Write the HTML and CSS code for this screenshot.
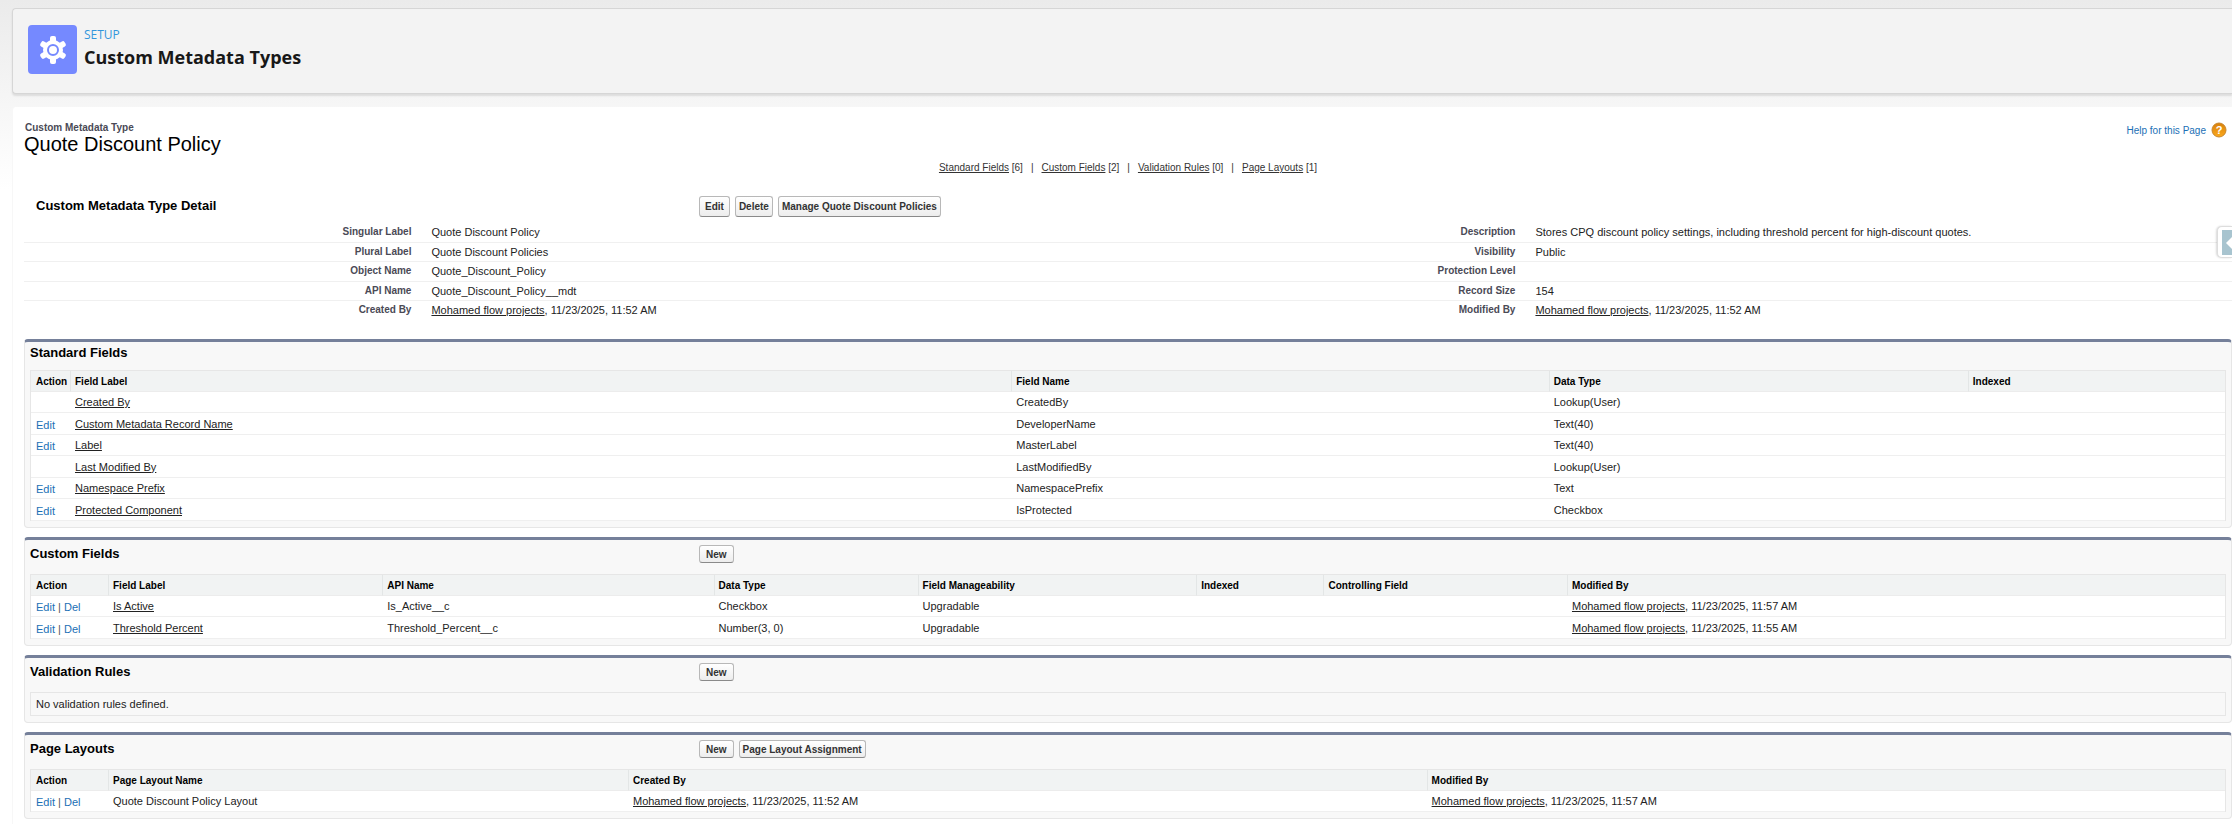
FILE: index.html
```html
<!DOCTYPE html>
<html lang="en">
<head>
    <meta charset="UTF-8">
    <meta name="viewport" content="width=device-width, initial-scale=1.0">
    <title>Custom Metadata Types</title>
    <link rel="stylesheet" href="styles.css">
</head>
<body>
    <header class="page-header">
        <div class="header-icon">
            <svg width="28" height="28" viewBox="-14 -14 28 28">
                <g fill="#fff">
                    <circle r="10"/>
                    <rect x="-3" y="-14" width="6" height="28" rx="2"/>
                    <rect x="-3" y="-14" width="6" height="28" rx="2" transform="rotate(60)"/>
                    <rect x="-3" y="-14" width="6" height="28" rx="2" transform="rotate(120)"/>
                </g>
                <circle r="5" fill="#fff" stroke="#7589ff" stroke-width="2"/>
            </svg>
        </div>
        <div class="header-text">
            <p class="header-label">SETUP</p>
            <h1>Custom Metadata Types</h1>
        </div>
    </header>

    <main class="content">
        <div class="title-bar">
            <div>
                <p class="type-label">Custom Metadata Type</p>
                <h2 class="type-name">Quote Discount Policy</h2>
            </div>
            <a class="help-link" href="#">
                <span>Help for this Page</span>
                <svg width="16" height="16" viewBox="0 0 16 16">
                    <defs>
                        <linearGradient id="helpFill" x1="0" y1="0" x2="0" y2="1">
                            <stop offset="0" stop-color="#d9800b"/>
                            <stop offset="1" stop-color="#fba91c"/>
                        </linearGradient>
                    </defs>
                    <circle cx="8" cy="8" r="7" fill="url(#helpFill)" stroke="#c9872d"/>
                    <text class="help-mark" x="8" y="12" text-anchor="middle">?</text>
                </svg>
            </a>
        </div>

        <nav class="jump-links">
            <a href="#standard"><u>Standard Fields</u> [6]</a><span>|</span>
            <a href="#custom"><u>Custom Fields</u> [2]</a><span>|</span>
            <a href="#validation"><u>Validation Rules</u> [0]</a><span>|</span>
            <a href="#layouts"><u>Page Layouts</u> [1]</a>
        </nav>

        <section class="detail">
            <div class="detail-head">
                <h3>Custom Metadata Type Detail</h3>
                <div class="buttons">
                    <button class="btn btn-short">Edit</button>
                    <button class="btn">Delete</button>
                    <button class="btn">Manage Quote Discount Policies</button>
                </div>
            </div>
            <table class="detail-table">
                <tr>
                    <th>Singular Label</th><td>Quote Discount Policy</td>
                    <th>Description</th><td>Stores CPQ discount policy settings, including threshold percent for high-discount quotes.</td>
                </tr>
                <tr>
                    <th>Plural Label</th><td>Quote Discount Policies</td>
                    <th>Visibility</th><td>Public</td>
                </tr>
                <tr>
                    <th>Object Name</th><td>Quote_Discount_Policy</td>
                    <th>Protection Level</th><td></td>
                </tr>
                <tr>
                    <th>API Name</th><td>Quote_Discount_Policy__mdt</td>
                    <th>Record Size</th><td>154</td>
                </tr>
                <tr>
                    <th>Created By</th><td><a href="#">Mohamed flow projects</a>, 11/23/2025, 11:52 AM</td>
                    <th>Modified By</th><td><a href="#">Mohamed flow projects</a>, 11/23/2025, 11:52 AM</td>
                </tr>
            </table>
        </section>

        <section class="block" id="standard">
            <div class="block-head block-head-plain">
                <h3>Standard Fields</h3>
            </div>
            <table class="list standard-list">
                <thead>
                    <tr>
                        <th class="col-action">Action</th>
                        <th class="col-label">Field Label</th>
                        <th class="col-name">Field Name</th>
                        <th class="col-type">Data Type</th>
                        <th>Indexed</th>
                    </tr>
                </thead>
                <tbody>
                    <tr><td class="action"></td><td><a href="#">Created By</a></td><td>CreatedBy</td><td>Lookup(User)</td><td></td></tr>
                    <tr><td class="action"><a href="#">Edit</a></td><td><a href="#">Custom Metadata Record Name</a></td><td>DeveloperName</td><td>Text(40)</td><td></td></tr>
                    <tr><td class="action"><a href="#">Edit</a></td><td><a href="#">Label</a></td><td>MasterLabel</td><td>Text(40)</td><td></td></tr>
                    <tr><td class="action"></td><td><a href="#">Last Modified By</a></td><td>LastModifiedBy</td><td>Lookup(User)</td><td></td></tr>
                    <tr><td class="action"><a href="#">Edit</a></td><td><a href="#">Namespace Prefix</a></td><td>NamespacePrefix</td><td>Text</td><td></td></tr>
                    <tr><td class="action"><a href="#">Edit</a></td><td><a href="#">Protected Component</a></td><td>IsProtected</td><td>Checkbox</td><td></td></tr>
                </tbody>
            </table>
        </section>

        <section class="block" id="custom">
            <div class="block-head">
                <h3>Custom Fields</h3>
                <div class="buttons">
                    <button class="btn btn-small btn-new">New</button>
                </div>
            </div>
            <table class="list custom-list">
                <thead>
                    <tr>
                        <th class="col-action">Action</th>
                        <th class="col-label">Field Label</th>
                        <th class="col-api">API Name</th>
                        <th class="col-type">Data Type</th>
                        <th class="col-manage">Field Manageability</th>
                        <th class="col-indexed">Indexed</th>
                        <th class="col-control">Controlling Field</th>
                        <th>Modified By</th>
                    </tr>
                </thead>
                <tbody>
                    <tr>
                        <td class="action"><a href="#">Edit</a> | <a href="#">Del</a></td>
                        <td><a href="#">Is Active</a></td>
                        <td>Is_Active__c</td>
                        <td>Checkbox</td>
                        <td>Upgradable</td>
                        <td></td>
                        <td></td>
                        <td><a href="#">Mohamed flow projects</a>, 11/23/2025, 11:57 AM</td>
                    </tr>
                    <tr>
                        <td class="action"><a href="#">Edit</a> | <a href="#">Del</a></td>
                        <td><a href="#">Threshold Percent</a></td>
                        <td>Threshold_Percent__c</td>
                        <td>Number(3, 0)</td>
                        <td>Upgradable</td>
                        <td></td>
                        <td></td>
                        <td><a href="#">Mohamed flow projects</a>, 11/23/2025, 11:55 AM</td>
                    </tr>
                </tbody>
            </table>
        </section>

        <section class="block" id="validation">
            <div class="block-head">
                <h3>Validation Rules</h3>
                <div class="buttons">
                    <button class="btn btn-small btn-new">New</button>
                </div>
            </div>
            <p class="empty">No validation rules defined.</p>
        </section>

        <section class="block" id="layouts">
            <div class="block-head">
                <h3>Page Layouts</h3>
                <div class="buttons">
                    <button class="btn btn-small btn-new">New</button>
                    <button class="btn btn-small">Page Layout Assignment</button>
                </div>
            </div>
            <table class="list layout-list">
                <thead>
                    <tr>
                        <th class="col-action">Action</th>
                        <th class="col-label">Page Layout Name</th>
                        <th class="col-created">Created By</th>
                        <th>Modified By</th>
                    </tr>
                </thead>
                <tbody>
                    <tr>
                        <td class="action"><a href="#">Edit</a> | <a href="#">Del</a></td>
                        <td>Quote Discount Policy Layout</td>
                        <td><a href="#">Mohamed flow projects</a>, 11/23/2025, 11:52 AM</td>
                        <td><a href="#">Mohamed flow projects</a>, 11/23/2025, 11:57 AM</td>
                    </tr>
                </tbody>
            </table>
        </section>
    </main>

    <!-- collapsed side panel handle -->
    <button class="side-tab" aria-label="Open side panel">
        <svg width="10" height="25" viewBox="0 0 10 25">
            <rect width="10" height="25" fill="#a8c4cf"/>
            <path d="M4 13l6-6v12z" fill="#fff"/>
        </svg>
    </button>
</body>
</html>
```
FILE: styles.css
```css
* {
    box-sizing: border-box;
}

body {
    font-family: Arial, "Liberation Sans", sans-serif;
    font-size: 11px;
    color: #222;
    margin: 0;
    padding: 8px 0 0 12px;
    background: #fff linear-gradient(#ebebeb, #fff 190px) no-repeat;
}

h1, h2, h3, p {
    margin: 0;
}

/* Setup header */
.page-header {
    display: flex;
    gap: 7px;
    padding: 16px 15px 19px;
    background: #f3f3f3;
    border: 1px solid #d6d6d6;
    border-right: none;
    border-radius: 4px 0 0 4px;
    box-shadow: 0 2px 2px rgba(0, 0, 0, 0.1);
}

.header-icon {
    display: flex;
    align-items: center;
    justify-content: center;
    width: 49px;
    height: 49px;
    background: #7589ff;
    border-radius: 4px;
}

.header-text {
    font-family: "Segoe UI", "Open Sans", sans-serif;
}

.header-label {
    font-size: 12px;
    line-height: 20px;
    color: #3296dc;
}

.header-text h1 {
    font-size: 18px;
    line-height: 24px;
    color: #181818;
}

/* Page content */
.content {
    margin-top: 13px;
    padding: 15px 0 5px 11px;
    background: #fff;
    border-left: 1px solid #f7f7f7;
    border-radius: 4px 0 0 0;
}

.title-bar {
    display: flex;
    justify-content: space-between;
    align-items: flex-start;
}

.type-label {
    font-size: 10px;
    line-height: 12px;
    font-weight: bold;
    color: #4a4a56;
    padding-left: 1px;
}

.type-name {
    font-size: 20px;
    line-height: 20px;
    font-weight: normal;
    color: #000;
}

.help-link {
    display: flex;
    gap: 5px;
    align-items: flex-start;
    padding-right: 5px;
    font-size: 10px;
    line-height: 18px;
    color: #1b6fb5;
    text-decoration: none;
}

.help-mark {
    font-size: 11px;
    font-weight: bold;
    fill: #fff;
}

.jump-links {
    display: flex;
    justify-content: center;
    gap: 8px;
    margin: 7px 0 21px;
    font-size: 10px;
    line-height: 14px;
    color: #333;
}

.jump-links a {
    color: #333;
    text-decoration: none;
}

h3 {
    width: 675px;
    font-size: 13px;
    line-height: 20px;
    color: #000;
}

.buttons {
    display: flex;
    gap: 5px;
}

.btn {
    height: 21px;
    padding: 0 3px;
    font-family: inherit;
    font-size: 10px;
    font-weight: bold;
    color: #333;
    background: linear-gradient(#fff, #ededed);
    border: 1px solid #b8b8b8;
    border-bottom-color: #8a8a8a;
    border-radius: 3px;
}

.btn-short {
    padding: 0 5px;
}

.btn-new {
    padding: 0 6px;
}

.btn-small {
    height: 18px;
}

/* Detail section */
.detail-head {
    display: flex;
}

.detail-head h3 {
    padding-left: 12px;
}

.detail-table {
    width: 100%;
    margin: 5px 0 19px;
    border-collapse: collapse;
    table-layout: fixed;
}

.detail-table th, .detail-table td {
    height: 20px;
    padding: 0 10px;
    line-height: 18px;
    border-bottom: 1px solid #f0f0f0;
}

.detail-table tr:nth-child(even) th, .detail-table tr:nth-child(even) td {
    height: 19px;
}

.detail-table tr:last-child th, .detail-table tr:last-child td {
    border-bottom: none;
}

.detail-table th {
    width: 18%;
    font-size: 10px;
    text-align: right;
    color: #4a4a56;
}

.detail-table td {
    width: 32%;
    text-align: left;
}

td a {
    color: #222;
}

/* Related lists */
.block {
    margin-bottom: 9px;
    padding: 0 5px 6px;
    background: #f8f8f8;
    border: 1px solid #e6e6e6;
    border-top: 3px solid #75809a;
    border-radius: 4px;
}

.block:last-child {
    margin-bottom: 0;
}

.block-head {
    display: flex;
    align-items: center;
    height: 34px;
    padding-bottom: 6px;
}

.block-head h3 {
    width: 669px;
}

.block-head-plain {
    height: 28px;
}

.list {
    width: 100%;
    border-collapse: separate;
    border-spacing: 0;
    table-layout: fixed;
    border: 1px solid #e6e6e6;
    border-bottom: none;
}

.list th {
    height: 21px;
    padding: 2px 4px 0;
    font-size: 10px;
    line-height: 18px;
    text-align: left;
    white-space: nowrap;
    color: #000;
    background: #f1f3f3;
    border-bottom: 1px solid #ececec;
    border-left: 1px solid #e3e6e6;
}

.list th:first-child {
    border-left: none;
}

.list td {
    height: 21px;
    padding: 0 5px;
    line-height: 18px;
    background: #fff;
    border-bottom: 1px solid #efefef;
}

.list tr:nth-child(even) td {
    height: 22px;
}

.list .action {
    padding: 2px 0 0 5px;
    color: #555;
}

.list .action a {
    color: #1b6fb5;
    text-decoration: none;
}

.col-action {
    width: 77px;
}

.list .col-action {
    padding-left: 5px;
}

.standard-list .col-action { width: 39px; padding-right: 0; }
.standard-list .col-label { width: 42.9%; }
.standard-list .col-name { width: 24.5%; }
.standard-list .col-type { width: 19.1%; }

.custom-list .col-label { width: 12.5%; }
.custom-list .col-api { width: 15.1%; }
.custom-list .col-type { width: 9.3%; }
.custom-list .col-manage { width: 12.7%; }
.custom-list .col-indexed { width: 5.8%; }
.custom-list .col-control { width: 11.1%; }

.layout-list .col-label { width: 23.7%; }
.layout-list .col-created { width: 36.4%; }

.empty {
    padding: 2px 5px;
    line-height: 18px;
    border: 1px solid #e6e6e6;
}

/* Side panel handle */
.side-tab {
    position: absolute;
    top: 226px;
    right: 0;
    width: 15px;
    height: 32px;
    padding: 0 0 0 4px;
    line-height: 0;
    background: #fff;
    border: 1px solid #ddd;
    border-right: none;
    border-radius: 5px 0 0 5px;
    box-shadow: -1px 0 2px rgba(0, 0, 0, 0.15);
}
```
